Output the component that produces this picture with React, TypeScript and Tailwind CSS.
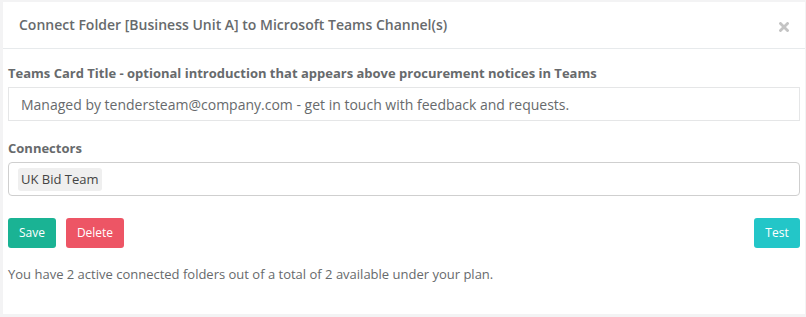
import React from 'react';

// Modal: hubungkan folder ke channel Microsoft Teams
const App = () => {
  return (
    <div
      className="h-[317px] w-[806px] bg-[#f3f3f4] pl-[3px] pt-[2px] pr-[1px] pb-[3px] text-[#676a6c]"
      style={{ fontFamily: '"Open Sans", "Liberation Sans", sans-serif' }}
    >
      <div className="flex h-full flex-col bg-white">
        {/* Header */}
        <div className="flex h-[47px] items-center justify-between border-b border-[#e7eaec] pl-[16px] pr-[16px]">
          <h4 className="text-[14px] font-semibold leading-5 text-[#676a6c]">
            Connect Folder [Business Unit A] to Microsoft Teams Channel(s)
          </h4>
          <svg width="10" height="10" viewBox="0 0 10 10" className="mt-[3px]">
            <path d="M1.5 1.5 L8.5 8.5 M8.5 1.5 L1.5 8.5" stroke="#c4c4c4" strokeWidth="2.8" strokeLinecap="square" />
          </svg>
        </div>

        {/* Body */}
        <div className="flex flex-col px-[5px] pt-[15px]">
          <label className="text-[13px] font-bold leading-[18px]">
            Teams Card Title - optional introduction that appears above procurement notices in Teams
          </label>
          <div className="mt-[5px] flex h-[34px] items-center border border-[#e5e6e7] px-[12px] text-[14px]">
            Managed by tendersteam@company.com - get in touch with feedback and requests.
          </div>

          <label className="mt-[18px] text-[13px] font-bold leading-[18px]">Connectors</label>
          <div className="mt-[5px] flex h-[34px] items-center rounded-[4px] border border-[#cfcfcf] px-[9px]">
            <span className="rounded-[3px] bg-[#efefef] px-[3px] py-[3px] text-[13px] leading-[17px] text-[#444]">
              UK Bid Team
            </span>
          </div>

          <div className="mt-[22px] flex items-center justify-between">
            <div className="flex gap-[10px]">
              <button className="h-[30px] w-[48px] rounded-[3px] bg-[#1ab394] text-[12px] text-white">Save</button>
              <button className="h-[30px] w-[58px] rounded-[3px] bg-[#ed5565] text-[12px] text-white">Delete</button>
            </div>
            <button className="h-[30px] w-[46px] rounded-[3px] bg-[#23c6c8] text-[12px] text-white">Test</button>
          </div>

          <p className="mt-[17px] text-[13px] leading-[18px]">
            You have 2 active connected folders out of a total of 2 available under your plan.
          </p>
        </div>
      </div>
    </div>
  );
};

export default App;
